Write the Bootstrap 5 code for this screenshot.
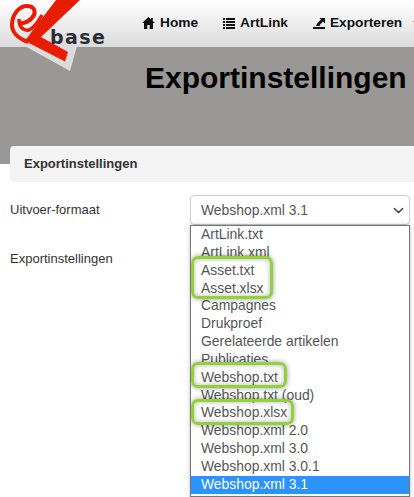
<!DOCTYPE html>
<html lang="nl"><head><meta charset="utf-8"><title>Exportinstellingen</title>
<link href="https://cdn.jsdelivr.net/npm/bootstrap@5.3.0/dist/css/bootstrap.min.css" rel="stylesheet">
<style>
html,body{height:497px;overflow:hidden}
body{font-family:"Liberation Sans",Arial,sans-serif;font-size:14px;color:#333;background:#fff}
.topbar{height:47px;background:linear-gradient(#fff,#dcdcdc);padding-left:142px;gap:25px;white-space:nowrap}
.toplink{color:#111;font-weight:700;font-size:13.7px;text-decoration:none;gap:5px}
.toplink svg{flex:none}
.cartdown{width:0;height:0;border:4px solid transparent;border-top-color:#333;border-bottom:0;margin-left:6px}
.logo-box{position:absolute;left:0;top:0;width:110px;height:72px}
.logo-word{position:absolute;left:50px;top:26px;font-family:"DejaVu Sans",sans-serif;font-weight:700;font-size:19px;line-height:22px;color:#2b2d38;letter-spacing:1.4px}
.hero{height:117px;background:#9a9896;padding:13px 0 0 145px}
.hero-title{font-size:30px;font-weight:700;color:#000;margin:0;line-height:36px;white-space:nowrap}
.sheet{margin:-18px 0 0 10px;position:relative}
.sheet-head{height:36px;background:#f4f4f4;border-radius:4px 0 0 4px;padding-left:14px;font-weight:700;font-size:13px;line-height:35px;color:#333}
.form-zone{padding:13px 4px 0 0;margin-left:-10px}
.lab{width:190px;flex:none;font-size:13px;color:#333;padding-left:10px}
.lab-top{padding-top:5px}
.sel-wrap{flex:1;position:relative}
.sel-box{height:30px;padding:0 10px;font-size:13.9px;line-height:28px;border-radius:4px;border-color:#ccc;color:#555;background-position:right 4px center;background-size:13px 11px}
.row-b{margin-top:24px}
.droplist{position:absolute;left:0;right:0;top:30px;height:272px;background:#fff;border:1px solid #767676;z-index:3;overflow:hidden;font-size:13.9px;color:#555;box-shadow:0 0 4px rgba(0,0,0,.25)}
.opt{height:17.85px;line-height:16px;padding-left:10px;white-space:nowrap}
.opt-on{background:#2a93fc;color:#fff}
.mark-ring{position:absolute;border:3.5px solid #93d13c;border-radius:7px;box-shadow:0 0 5px rgba(0,0,0,.4),inset 0 0 5px rgba(0,0,0,.3);pointer-events:none}
.ring-a{left:0;top:30px;width:82px;height:43px}
.ring-b{left:0;top:136px;width:96px;height:26px}
.ring-c{left:0;top:173px;width:103px;height:26px}
.stub{position:absolute;left:190px;top:494px;width:13px;height:8px;border:1px solid #888;border-radius:2px}
</style></head><body>
<nav class="topbar d-flex align-items-center">
  <a class="toplink d-flex align-items-center" href="#"><svg width="13" height="12" viewBox="0 0 13 12"><path fill="#111" d="M6.500 0 0 6h2v6h3.300V8h2.400v4H11V6h2L10.800 4V1H9v1.400z"/></svg>Home</a>
  <a class="toplink d-flex align-items-center" href="#"><svg width="12" height="11" viewBox="0 0 12 11"><path fill="#111" d="M0 0h2v2H0zM3 0h9v2H3zM0 3h2v2H0zM3 3h9v2H3zM0 6h2v2H0zM3 6h9v2H3zM0 9h2v2H0zM3 9h9v2H3z"/></svg>ArtLink</a>
  <a class="toplink d-flex align-items-center" href="#"><svg width="12" height="12" viewBox="0 0 12 12"><path fill="#111" d="M0 10h12v2H0zM3 9l1.500-3L8 2.500 6.500 1H12v5.500L10 4.500 6.500 8l1 1z"/></svg>Exporteren<span class="cartdown"></span></a>
</nav>
<div class="logo-box">
  <svg width="110" height="72" viewBox="0 0 110 72">
    <path fill="#dcdcdc" d="M23 45 70 71l7-25-30-4z"/>
    <path fill="#e81c00" d="M56 0h24L41 37l27 15-3 9.500L25 41l5-7z"/>
    <path fill="none" stroke="#e81c00" stroke-width="4" d="M28 42C17 38 11 31 12 23 13 13 20 6 27 6c6 0 9 4 7 9-3 6-10 9-15 8"/>
    <path fill="none" stroke="#e81c00" stroke-width="3.500" d="M19 19c0 8 4 12 10 11 5-2 9-8 13-15"/>
  </svg>
  <span class="logo-word">base</span>
</div>
<header class="hero"><h1 class="hero-title">Exportinstellingen</h1></header>
<section class="sheet">
  <div class="sheet-head">Exportinstellingen</div>
  <div class="form-zone">
    <div class="d-flex align-items-start">
      <label class="lab lab-top">Uitvoer-formaat</label>
      <div class="sel-wrap">
        <select class="form-select sel-box"><option>Webshop.xml 3.1</option></select>
        <div class="droplist">
          <div class="opt">ArtLink.txt</div><div class="opt">ArtLink.xml</div><div class="opt">Asset.txt</div><div class="opt">Asset.xlsx</div><div class="opt">Campagnes</div><div class="opt">Drukproef</div><div class="opt">Gerelateerde artikelen</div><div class="opt">Publicaties</div><div class="opt">Webshop.txt</div><div class="opt">Webshop.txt (oud)</div><div class="opt">Webshop.xlsx</div><div class="opt">Webshop.xml 2.0</div><div class="opt">Webshop.xml 3.0</div><div class="opt">Webshop.xml 3.0.1</div><div class="opt opt-on">Webshop.xml 3.1</div>
          <div class="mark-ring ring-a"></div><div class="mark-ring ring-b"></div><div class="mark-ring ring-c"></div>
        </div>
      </div>
    </div>
    <div class="d-flex row-b"><label class="lab">Exportinstellingen</label></div>
  </div>
</section>
<div class="stub"></div>
</body></html>
